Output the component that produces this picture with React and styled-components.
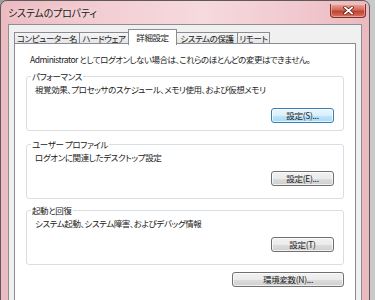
import React from 'react';
import styled, { createGlobalStyle } from 'styled-components';

const GlobalStyle = createGlobalStyle`
  html, body {
    margin: 0;
    padding: 0;
  }
  body {
    background: #a9a9a9;
    font-family: "Noto Sans CJK JP", "Liberation Sans", sans-serif;
  }
`;

const Page = styled.div`
  width: 375px;
  height: 300px;
  overflow: hidden;
  background: linear-gradient(to right, #9c9c9c, #c9c9c9);
`;

const Window = styled.div`
  box-sizing: border-box;
  width: 370px;
  height: 320px;
  display: flex;
  flex-direction: column;
  padding: 0 7px;
  border: 1px solid #5e5a5c;
  border-radius: 7px 7px 0 0;
  background: linear-gradient(to right, #ecbac1, #f3cfd3 30%, #f6dade 55%, #f1c9ce 80%, #ebb9c0);
`;

const TitleBar = styled.div`
  height: 23px;
  display: flex;
  align-items: center;
  justify-content: space-between;
  margin-right: -4px;
`;

const Title = styled.span`
  font-size: 10px;
  letter-spacing: -0.2px;
  color: #1a1a1a;
  font-feature-settings: "palt";
  text-shadow: 0 0 6px rgba(255, 255, 255, 0.9);
`;

const CloseButton = styled.div`
  box-sizing: border-box;
  width: 36px;
  height: 14px;
  align-self: flex-start;
  margin-top: 3px;
  display: flex;
  align-items: center;
  justify-content: center;
  border: 1px solid #7a2f27;
  border-top: none;
  border-radius: 0 0 4px 4px;
  background: linear-gradient(#e9a99c, #d16b5c 45%, #c0402f 55%, #d7735f);
  box-shadow: inset 0 0 0 1px rgba(255, 220, 210, 0.45);
`;

const Client = styled.div`
  flex: 1;
  display: flex;
  flex-direction: column;
  padding: 4px 5px 0;
  background: #f0f0f0;
  border: 1px solid #8d8f93;
  border-bottom: none;
`;

const TabStrip = styled.div`
  display: flex;
  align-items: flex-end;
  height: 15px;
  position: relative;
  z-index: 1;
`;

const Tab = styled.div`
  box-sizing: border-box;
  width: ${(p) => p.$w}px;
  height: ${(p) => (p.$active ? 16 : 12)}px;
  margin-bottom: ${(p) => (p.$active ? -1 : 0)}px;
  margin-left: -1px;
  display: flex;
  align-items: center;
  justify-content: center;
  border: 1px solid #898c95;
  border-bottom: ${(p) => (p.$active ? 'none' : '1px solid #898c95')};
  background: ${(p) => (p.$active ? '#ffffff' : 'linear-gradient(#f5f5f5, #e6e6e6)')};
  font-size: 8.5px;
  letter-spacing: -0.4px;
  line-height: 1;
  color: #222;
  font-feature-settings: "palt";
  white-space: nowrap;
  &:first-child {
    margin-left: 0;
  }
`;

const Panel = styled.div`
  flex: 1;
  padding: 8px 11px 0;
  background: #ffffff;
  border: 1px solid #898c95;
  margin-top: -1px;
`;

const Notice = styled.p`
  margin: 0 0 4px 4px;
  font-size: 8.5px;
  letter-spacing: -0.5px;
  line-height: 14px;
  color: #222;
  font-feature-settings: "palt";
  white-space: nowrap;
`;

const Group = styled.fieldset`
  margin: ${(p) => p.$gap}px 0 0;
  padding: 0 9px ${(p) => p.$bottom}px 8px;
  min-inline-size: 0;
  border: 1px solid #d5dfe5;
  border-radius: 3px;
`;

const Legend = styled.legend`
  margin-left: -4px;
  padding: 0 1px;
  font-size: 8.5px;
  letter-spacing: -0.4px;
  line-height: 12px;
  color: #222;
  font-feature-settings: "palt";
`;

const Desc = styled.div`
  font-size: 8.5px;
  letter-spacing: -0.4px;
  line-height: 14px;
  color: #222;
  font-feature-settings: "palt";
  white-space: nowrap;
`;

const ButtonRow = styled.div`
  display: flex;
  justify-content: flex-end;
  margin-top: ${(p) => p.$gap}px;
`;

const Button = styled.button`
  box-sizing: border-box;
  width: ${(p) => p.$w}px;
  height: 15px;
  padding: 0;
  display: flex;
  align-items: center;
  justify-content: center;
  font-family: "Noto Sans CJK JP", "Liberation Sans", sans-serif;
  font-size: 8.5px;
  letter-spacing: -0.3px;
  line-height: 1;
  color: #222;
  font-feature-settings: "palt";
  border-radius: 3px;
  border: 1px solid ${(p) => (p.$focus ? '#3c7fb1' : '#707070')};
  background: ${(p) =>
    p.$focus
      ? 'linear-gradient(#eaf6fd, #d9f0fc 50%, #bee6fd 51%, #a7d9f5)'
      : 'linear-gradient(#f2f2f2, #ebebeb 50%, #dddddd 51%, #cfcfcf)'};
  box-shadow: inset 0 0 0 1px rgba(255, 255, 255, 0.7);
`;

const tabs = [
  { label: 'コンピューター名', w: 66 },
  { label: 'ハードウェア', w: 50 },
  { label: '詳細設定', w: 49, active: true },
  { label: 'システムの保護', w: 62 },
  { label: 'リモート', w: 33 },
];

const groups = [
  {
    title: 'パフォーマンス',
    desc: '視覚効果、プロセッサのスケジュール、メモリ使用、および仮想メモリ',
    button: '設定(S)...',
    focus: true,
    gap: 0,
    btnGap: 12,
    bottom: 7,
  },
  {
    title: 'ユーザー プロファイル',
    desc: 'ログオンに関連したデスクトップ設定',
    button: '設定(E)...',
    gap: 7,
    btnGap: 7,
    bottom: 12,
  },
  {
    title: '起動と回復',
    desc: 'システム起動、システム障害、およびデバッグ情報',
    button: '設定(T)',
    gap: 5,
    btnGap: 7,
    bottom: 12,
  },
];

const CloseIcon = () => (
  <svg width="11" height="9" viewBox="0 0 11 9">
    <path d="M2 1.5 L9 7.5 M9 1.5 L2 7.5" stroke="#5a1e18" strokeWidth="3.2" strokeLinecap="square" />
    <path d="M2 1.5 L9 7.5 M9 1.5 L2 7.5" stroke="#ffffff" strokeWidth="1.8" strokeLinecap="square" />
  </svg>
);

const App = () => {
  return (
    <Page>
      <GlobalStyle />
      <Window>
        <TitleBar>
          <Title>システムのプロパティ</Title>
          <CloseButton>
            <CloseIcon />
          </CloseButton>
        </TitleBar>
        <Client>
          <TabStrip>
            {tabs.map((t) => (
              <Tab key={t.label} $w={t.w} $active={t.active}>
                {t.label}
              </Tab>
            ))}
          </TabStrip>
          <Panel>
            <Notice>Administrator としてログオンしない場合は、これらのほとんどの変更はできません。</Notice>
            {groups.map((g) => (
              <Group key={g.title} $gap={g.gap} $bottom={g.bottom}>
                <Legend>{g.title}</Legend>
                <Desc>{g.desc}</Desc>
                <ButtonRow $gap={g.btnGap}>
                  <Button $w={63} $focus={g.focus}>
                    {g.button}
                  </Button>
                </ButtonRow>
              </Group>
            ))}
            <ButtonRow $gap={7}>
              <Button $w={112}>環境変数(N)...</Button>
            </ButtonRow>
          </Panel>
        </Client>
      </Window>
    </Page>
  );
};

export default App;
